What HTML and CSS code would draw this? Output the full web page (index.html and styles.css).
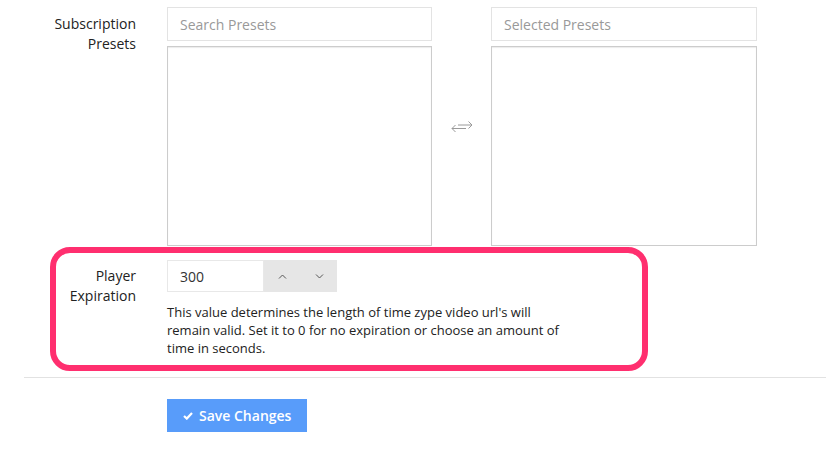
FILE: index.html
```html
<!DOCTYPE html>
<html lang="en">
<head>
<meta charset="utf-8">
<title>Settings</title>
<link rel="stylesheet" href="styles.css">
</head>
<body>
<form class="form">
  <div class="row row-presets">
    <label class="label">Subscription Presets</label>
    <div class="dual">
      <div class="col">
        <input class="search" type="text" placeholder="Search Presets">
        <div class="listbox"></div>
      </div>
      <div class="swap">
        <svg width="22" height="13" viewBox="0 0 22 13" fill="none" stroke="#9a9a9a" stroke-width="1">
          <path d="M7 5H21M17.5 1.5L21 5L17.5 8.5"/>
          <path d="M15 8.5H1M4.5 5L1 8.5L4.5 12"/>
        </svg>
      </div>
      <div class="col">
        <input class="search" type="text" placeholder="Selected Presets">
        <div class="listbox"></div>
      </div>
    </div>
  </div>

  <div class="highlight">
    <div class="row row-expiration">
      <label class="label">Player Expiration</label>
      <div class="control">
        <div class="spin-group">
          <input class="number" type="text" value="300">
          <div class="spin">
            <button type="button" class="spin-btn">
              <svg width="9" height="5" viewBox="0 0 9 5" fill="none" stroke="#555" stroke-width="1"><path d="M1 4.5L4.5 1L8 4.5"/></svg>
            </button>
            <button type="button" class="spin-btn">
              <svg width="9" height="5" viewBox="0 0 9 5" fill="none" stroke="#555" stroke-width="1"><path d="M1 0.5L4.5 4L8 0.5"/></svg>
            </button>
          </div>
        </div>
        <p class="help">This value determines the length of time zype video url's will remain valid. Set it to 0 for no expiration or choose an amount of time in seconds.</p>
      </div>
    </div>
  </div>

  <div class="divider"></div>

  <div class="actions">
    <button type="submit" class="btn-save">
      <svg width="10" height="8" viewBox="0 0 10 8" fill="none" stroke="#fff" stroke-width="2.2"><path d="M1 4L3.8 6.6L9 1"/></svg>
      <span>Save Changes</span>
    </button>
  </div>
</form>
</body>
</html>
```

FILE: styles.css
```css
* { box-sizing: border-box; }

html, body {
  margin: 0;
  background: #fff;
}

body {
  font-family: "Open Sans", "Liberation Sans", sans-serif;
  font-size: 14px;
  color: #333;
}

.form {
  padding-top: 7px;
}

.row {
  display: grid;
  column-gap: 31px;
  align-items: start;
}

.row-presets {
  grid-template-columns: 136px auto;
}

.row-expiration {
  grid-template-columns: 80px auto;
}

.label {
  padding-top: 7px;
  line-height: 20px;
  text-align: right;
  color: #222;
}

.row-presets .label {
  padding-left: 40px;
}

.dual {
  display: grid;
  grid-template-columns: 265px 59px 266px;
}

.col {
  display: flex;
  flex-direction: column;
  gap: 5px;
}

.search {
  height: 34px;
  border: 1px solid #e3e3e3;
  padding: 0 12px;
  font-family: inherit;
  font-size: 14px;
  color: #333;
  outline: none;
}

.search::placeholder {
  color: #999;
}

.listbox {
  height: 200px;
  border: 1px solid #ccc;
  box-shadow: inset 0 1px 1px rgba(0, 0, 0, 0.08);
}

.swap {
  display: flex;
  align-items: center;
  justify-content: center;
  padding-left: 1px;
}

.highlight {
  margin: 1px 0 0 50px;
  width: 598px;
  border: 6px solid #ff2f6f;
  border-radius: 20px;
  padding: 7px 0 8px;
}

.row-expiration .label {
  padding-top: 6px;
}

.spin-group {
  display: flex;
  height: 32px;
}

.number {
  width: 97px;
  height: 32px;
  border: 1px solid #e8e8e8;
  padding: 0 12px;
  font-family: inherit;
  font-size: 14px;
  color: #333;
  outline: none;
}

.spin {
  display: flex;
  background: #e6e6e6;
}

.spin-btn {
  width: 36px;
  height: 32px;
  border: 0;
  padding: 0;
  background: transparent;
  display: flex;
  align-items: center;
  justify-content: center;
}

.spin-btn:first-child {
  width: 37px;
}

.help {
  margin: 11px 0 0;
  width: 392px;
  font-size: 13px;
  line-height: 18px;
  color: #222;
}

.divider {
  margin: 6px 0 0 24px;
  border-top: 1px solid #e2e2e2;
}

.actions {
  padding: 21px 0 0 167px;
}

.btn-save {
  display: inline-flex;
  align-items: center;
  gap: 6px;
  height: 33px;
  padding: 0 16px 0 16px;
  border: 0;
  background: #589cfa;
  color: #fff;
  font-family: inherit;
  font-size: 14px;
  font-weight: 600;
}
```
